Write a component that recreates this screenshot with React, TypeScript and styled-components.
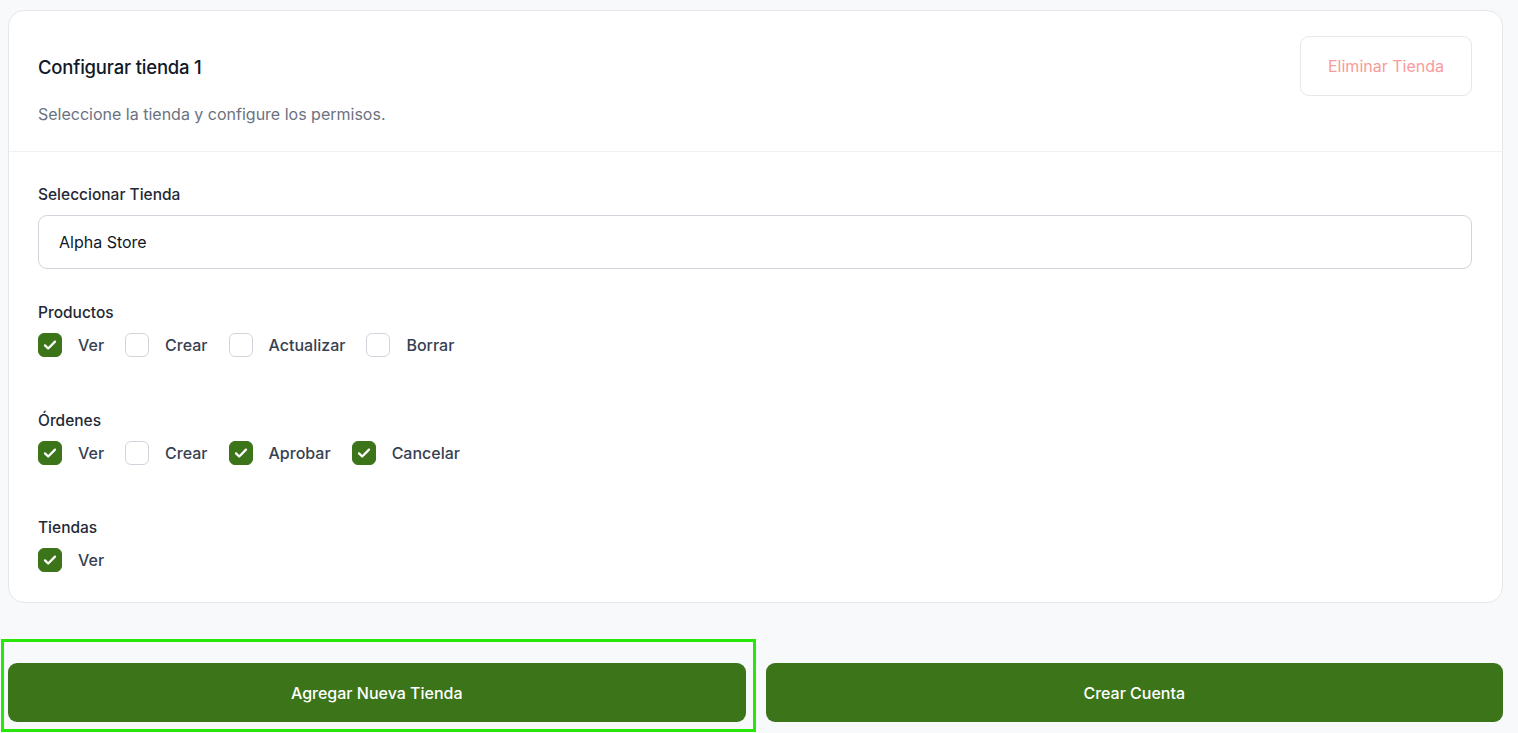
import * as React from "react";
import styled, { createGlobalStyle } from "styled-components";

const GlobalStyle = createGlobalStyle`
  body {
    margin: 0;
    background-color: #f8f9fb;
    font-family: "Inter", "Noto Sans", sans-serif;
    color: #1f2937;
  }
`;

const Page = styled.main`
  padding: 10px 15px 12px 8px;
`;

const Card = styled.section`
  background: #ffffff;
  border: 1px solid #e5e7eb;
  border-radius: 16px;
`;

const CardHeader = styled.header`
  display: flex;
  justify-content: space-between;
  align-items: flex-start;
  padding: 25px 30px 27px 29px;
  border-bottom: 1px solid #f0f1f3;
`;

const Title = styled.h2`
  margin: 19px 0 0;
  font-size: 18.5px;
  font-weight: 500;
  letter-spacing: -0.2px;
  color: #111827;
  line-height: 24px;
`;

const Subtitle = styled.p`
  margin: 25px 0 0;
  font-size: 16px;
  color: #6b7280;
  line-height: 20px;
`;

const GhostButton = styled.button`
  height: 60px;
  width: 172px;
  border: 1px solid #e5e7eb;
  border-radius: 9px;
  background: #fff;
  color: #fb9a9a;
  font-family: inherit;
  font-size: 16px;
  cursor: pointer;
`;

const CardBody = styled.div`
  padding: 33px 30px 30px 29px;
`;

const Label = styled.div`
  font-size: 15.5px;
  font-weight: 500;
  color: #1f2937;
  line-height: 20px;
`;

const Select = styled.div`
  margin-top: 10px;
  height: 54px;
  box-sizing: border-box;
  border: 1px solid #d1d5db;
  border-radius: 9px;
  display: flex;
  align-items: center;
  padding: 0 20px;
  font-size: 16px;
  color: #111827;
`;

const Group = styled.div<{ $gap: number }>`
  margin-top: ${(p) => p.$gap}px;
`;

const Row = styled.div`
  display: flex;
  gap: 21px;
  margin-top: 10px;
`;

const Option = styled.label`
  display: flex;
  align-items: center;
  gap: 16px;
  height: 24px;
  font-size: 16px;
  font-weight: 500;
  color: #374151;
`;

const Box = styled.span<{ $on: boolean }>`
  width: 24px;
  height: 24px;
  box-sizing: border-box;
  border-radius: 6px;
  border: 1px solid ${(p) => (p.$on ? "#3c7519" : "#d1d5db")};
  background: ${(p) => (p.$on ? "#3c7519" : "#fff")};
  display: flex;
  align-items: center;
  justify-content: center;
`;

const Actions = styled.div`
  display: grid;
  grid-template-columns: 1fr 1fr;
  gap: 20px;
  margin-top: 60px;
`;

const Slot = styled.div<{ $focused?: boolean }>`
  position: relative;
  display: flex;
  ${(p) =>
    p.$focused &&
    `
    &::after {
      content: "";
      position: absolute;
      left: -7px;
      right: -10px;
      top: -24px;
      bottom: -10px;
      border: 3px solid #27e60a;
      pointer-events: none;
    }
  `}
`;

const PrimaryButton = styled.button`
  flex: 1;
  height: 59px;
  border: none;
  border-radius: 9px;
  background: #3c7519;
  color: #fff;
  font-family: inherit;
  font-size: 16px;
  font-weight: 500;
  cursor: pointer;
`;

const Check = () => (
  <svg width="16" height="16" viewBox="0 0 24 24" fill="none" stroke="#fff" strokeWidth="3.4" strokeLinecap="round" strokeLinejoin="round">
    <path d="M4.5 12.5l4.8 4.8L19.5 7" />
  </svg>
);

type Perm = { name: string; on: boolean };

const groups: { title: string; gap: number; perms: Perm[] }[] = [
  {
    title: "Productos",
    gap: 34,
    perms: [
      { name: "Ver", on: true },
      { name: "Crear", on: false },
      { name: "Actualizar", on: false },
      { name: "Borrar", on: false },
    ],
  },
  {
    title: "Órdenes",
    gap: 54,
    perms: [
      { name: "Ver", on: true },
      { name: "Crear", on: false },
      { name: "Aprobar", on: true },
      { name: "Cancelar", on: true },
    ],
  },
  {
    title: "Tiendas",
    gap: 53,
    perms: [{ name: "Ver", on: true }],
  },
];

export default function App() {
  return (
    <>
      <GlobalStyle />
      <Page>
        <Card>
          <CardHeader>
            <div>
              <Title>Configurar tienda 1</Title>
              <Subtitle>Seleccione la tienda y configure los permisos.</Subtitle>
            </div>
            <GhostButton>Eliminar Tienda</GhostButton>
          </CardHeader>
          <CardBody>
            <Label>Seleccionar Tienda</Label>
            <Select>Alpha Store</Select>
            {groups.map((g) => (
              <Group key={g.title} $gap={g.gap}>
                <Label>{g.title}</Label>
                <Row>
                  {g.perms.map((p) => (
                    <Option key={p.name}>
                      <Box $on={p.on}>{p.on && <Check />}</Box>
                      {p.name}
                    </Option>
                  ))}
                </Row>
              </Group>
            ))}
          </CardBody>
        </Card>
        <Actions>
          <Slot $focused>
            <PrimaryButton>Agregar Nueva Tienda</PrimaryButton>
          </Slot>
          <Slot>
            <PrimaryButton>Crear Cuenta</PrimaryButton>
          </Slot>
        </Actions>
      </Page>
    </>
  );
}
